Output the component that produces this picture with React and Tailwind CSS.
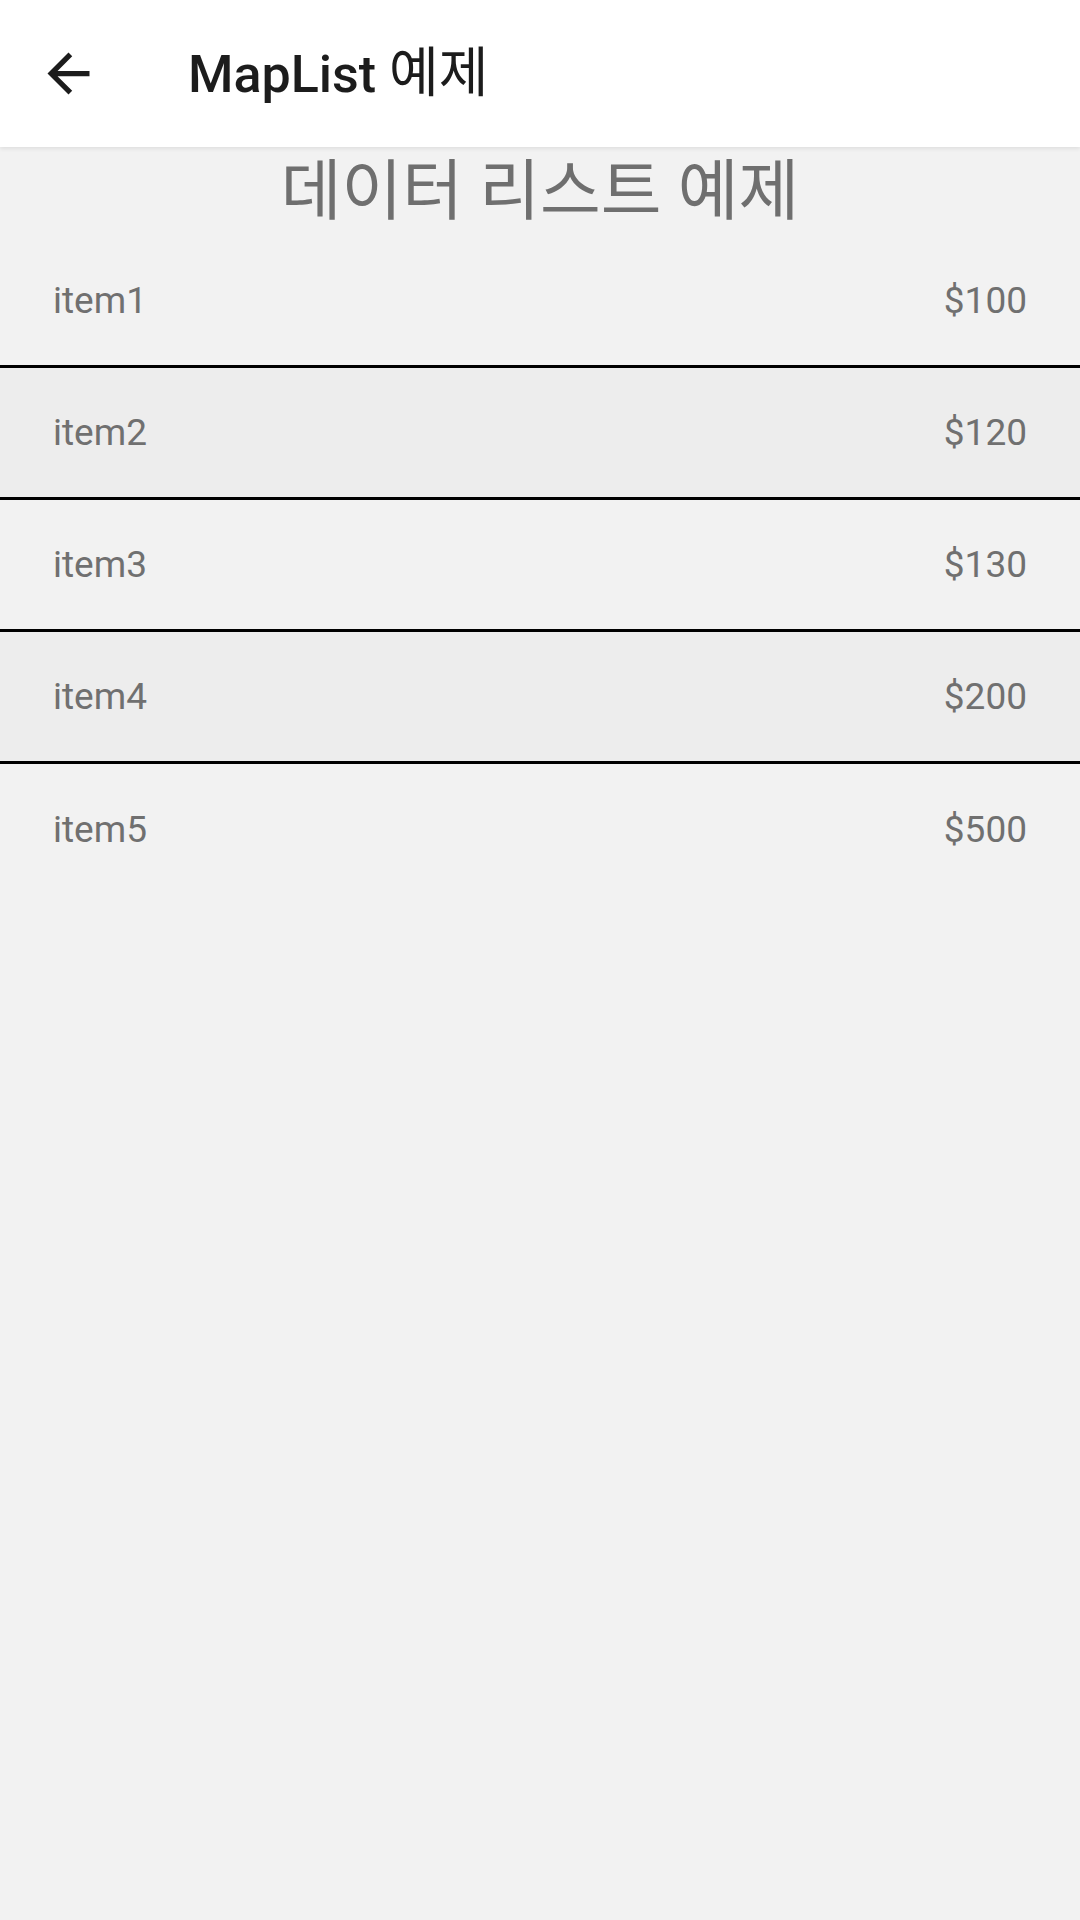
const items = [
  { name: 'item1', price: 100 },
  { name: 'item2', price: 120 },
  { name: 'item3', price: 130 },
  { name: 'item4', price: 200 },
  { name: 'item5', price: 500 },
]

function BackArrow() {
  return (
    <svg width="63" height="63" viewBox="0 0 24 24" fill="#1c1c1c">
      <path d="M20 11H7.83l5.59-5.59L12 4l-8 8 8 8 1.41-1.41L7.83 13H20v-2z" />
    </svg>
  )
}

export default function App() {
  return (
    <div className="min-h-[1920px] bg-[#f2f2f2] font-['Roboto','Noto_Sans_CJK_KR',sans-serif]">
      <header className="relative z-10 flex h-[147px] items-center bg-white shadow-[0_2px_4px_rgba(0,0,0,0.08)]">
        <div className="ml-[37px] flex h-[63px] w-[63px] items-center justify-center">
          <BackArrow />
        </div>
        <h1 className="ml-[88px] -mt-[1px] text-[52px] font-medium text-[#1c1c1c]">
          MapList <span className="text-[54px] font-normal">예제</span>
        </h1>
      </header>

      <h2 className="h-[89px] text-center text-[66px] leading-[89px] text-[#6f6f6f]">
        데이터 리스트 예제
      </h2>

      <ul>
        {items.map((item, i) => (
          <li
            key={item.name}
            className={`flex h-[132px] items-center justify-between px-[53px] text-[37px] text-[#707070] ${
              i % 2 === 1 ? 'bg-[#ededed]' : ''
            } ${i < items.length - 1 ? 'border-b-[3px] border-black' : ''}`}
          >
            <span>{item.name}</span>
            <span>${item.price}</span>
          </li>
        ))}
      </ul>
    </div>
  )
}
